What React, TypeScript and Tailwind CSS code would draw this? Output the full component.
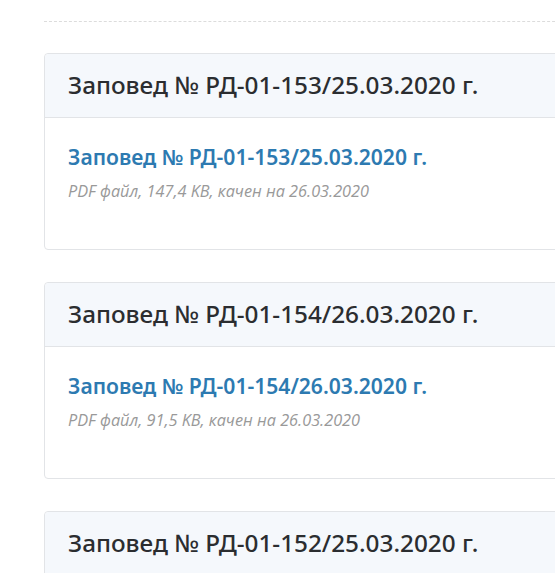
const docs = [
  { title: "Заповед № РД-01-153/25.03.2020 г.", meta: "PDF файл, 147,4 KB, качен на 26.03.2020" },
  { title: "Заповед № РД-01-154/26.03.2020 г.", meta: "PDF файл, 91,5 KB, качен на 26.03.2020" },
  { title: "Заповед № РД-01-152/25.03.2020 г.", meta: "PDF файл, 120,3 KB, качен на 25.03.2020" },
];

function DocCard({ title, meta }: { title: string; meta: string }) {
  return (
    <section className="rounded-[4px] border border-[#e2e4e7] bg-white">
      <div className="flex h-[64px] items-center rounded-t-[4px] border-b border-[#e2e4e7] bg-[#f5f8fc] px-[23px] pb-[2px]">
        <h2 className="text-[24.3px] font-medium leading-[30px] text-[#2b2d30]">{title}</h2>
      </div>
      <div className="h-[131px] px-[23px] pt-[24px]">
        <a href="#" className="block text-[21.1px] font-semibold leading-[30px] text-[#2d7ab1]">
          {title}
        </a>
        <p className="mt-[7px] font-['Open_Sans',sans-serif] text-[16.3px] italic leading-[24px] text-[#999999]">
          {meta}
        </p>
      </div>
    </section>
  );
}

export default function App() {
  return (
    <div className="h-[573px] overflow-hidden bg-white pl-[44px] pt-[21px] font-['Noto_Sans',sans-serif]">
      <div className="-mr-[20px] border-t border-dashed border-[#dcdcdc]" />
      <div className="-mr-[20px] mt-[31px] flex flex-col gap-[32px]">
        {docs.map((d) => (
          <DocCard key={d.title} title={d.title} meta={d.meta} />
        ))}
      </div>
    </div>
  );
}
